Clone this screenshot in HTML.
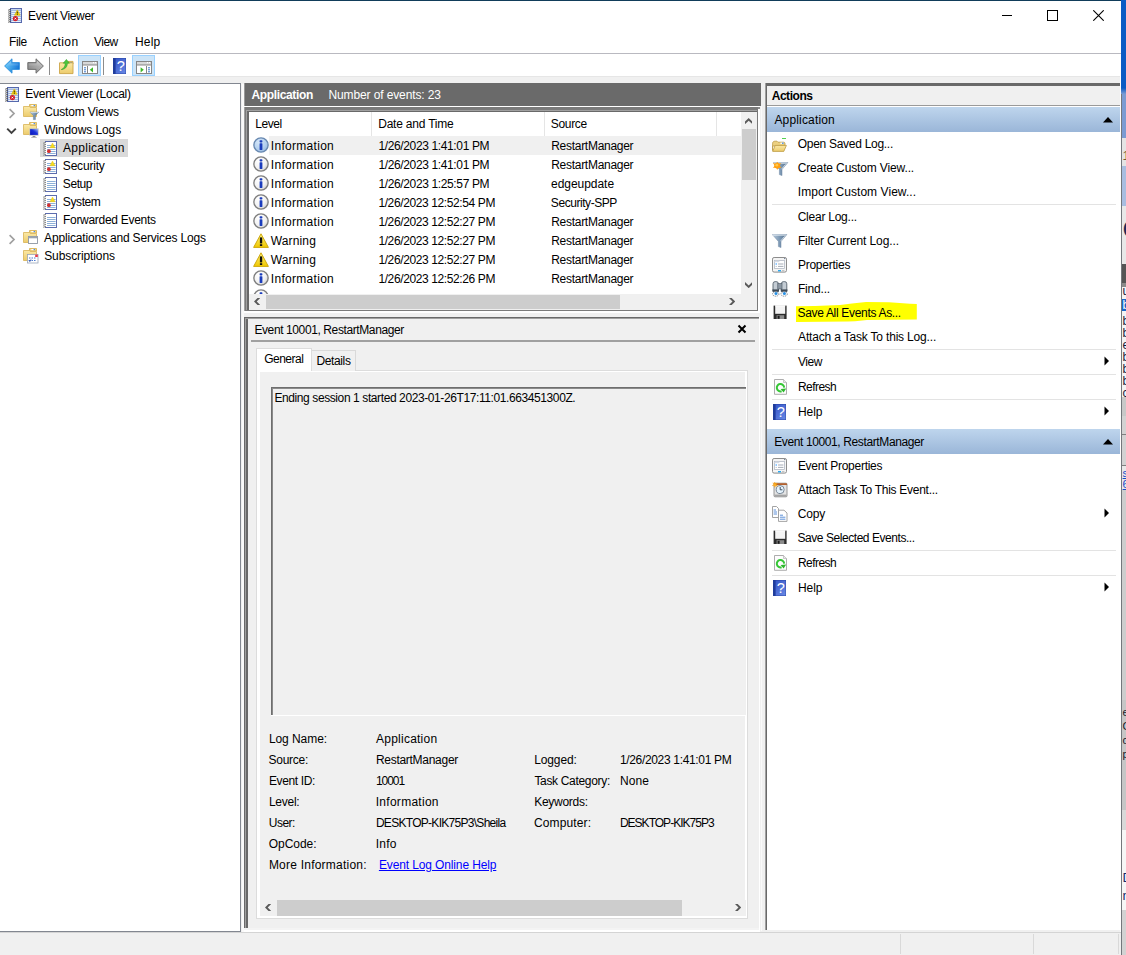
<!DOCTYPE html>
<html lang="en"><head><meta charset="utf-8"><title>Event Viewer</title>
<style>
html,body{margin:0;padding:0;}
body{width:1126px;height:955px;overflow:hidden;background:#f0f0f0;position:relative;font-family:"Liberation Sans", sans-serif;}
body>div,body>svg{position:absolute;}
.t{white-space:pre;}
</style></head><body>
<svg width="0" height="0" style="left:0;top:0"><defs><linearGradient id="gFold" x1="0" y1="0" x2="0" y2="1"><stop offset="0" stop-color="#fbe9a6"/><stop offset="1" stop-color="#eccb6c"/></linearGradient><linearGradient id="gBack" x1="0" y1="0" x2="1" y2="0"><stop offset="0" stop-color="#5cc4f8"/><stop offset="1" stop-color="#0a6fd6"/></linearGradient><linearGradient id="gFwd" x1="0" y1="0" x2="1" y2="0"><stop offset="0" stop-color="#8a8a8a"/><stop offset="1" stop-color="#b4b4b4"/></linearGradient><linearGradient id="gHelp" x1="0" y1="0" x2="1" y2="1"><stop offset="0" stop-color="#2f50c4"/><stop offset="1" stop-color="#6a8ae6"/></linearGradient><radialGradient id="gInfo" cx="0.35" cy="0.3" r="0.8"><stop offset="0" stop-color="#ffffff"/><stop offset="0.6" stop-color="#f2f2f2"/><stop offset="1" stop-color="#c9c9c9"/></radialGradient><radialGradient id="gInfoS" cx="0.35" cy="0.3" r="0.8"><stop offset="0" stop-color="#d4e6f8"/><stop offset="0.6" stop-color="#b4d0ee"/><stop offset="1" stop-color="#8eb2dc"/></radialGradient><linearGradient id="gWarn" x1="0" y1="0" x2="0" y2="1"><stop offset="0" stop-color="#fff27a"/><stop offset="1" stop-color="#f0c800"/></linearGradient><linearGradient id="gFun" x1="0" y1="0" x2="1" y2="0"><stop offset="0" stop-color="#b8cbdc"/><stop offset="0.5" stop-color="#7d99b5"/><stop offset="1" stop-color="#56708c"/></linearGradient><linearGradient id="gMon" x1="0" y1="1" x2="1" y2="0"><stop offset="0" stop-color="#0a14b8"/><stop offset="0.55" stop-color="#1a30d8"/><stop offset="1" stop-color="#9ab4f4"/></linearGradient><linearGradient id="gShine" x1="0" y1="0" x2="0" y2="1"><stop offset="0" stop-color="#fff" stop-opacity="0.45"/><stop offset="0.55" stop-color="#fff" stop-opacity="0.05"/><stop offset="1" stop-color="#000" stop-opacity="0.12"/></linearGradient></defs></svg>
<div style="left:0px;top:0px;width:1121px;height:955px;background:#f0f0f0;"></div>
<div style="left:0px;top:0px;width:1121px;height:1px;background:#113d5a;"></div>
<div style="left:0px;top:1px;width:1121px;height:52px;background:#ffffff;"></div>
<div class="t" style="left:28.0px;top:8px;font-size:12px;line-height:16px;letter-spacing:-0.339px;color:#000;">Event Viewer</div>
<svg style="left:8px;top:8px" width="14" height="15" viewBox="0 0 14 15"><rect x="2.5" y="0.5" width="11" height="14" fill="#c6d6f0" stroke="#5669ad"/><path d="M3 2.5H13M3 4.5H13M3 6.5H13M3 8.5H13M3 10.5H13M3 12.5H13" stroke="#a4bae2" stroke-width="1"/><path d="M4 3.5H12.6M4 5.5H12.6M4 7.5H12.6M4 9.5H12.6M4 11.5H12.6M4 13.5H12.6" stroke="#e9f0fb" stroke-width="1"/><path d="M0.2 2.2L2.8 1.4M0.2 4.2L2.8 3.4M0.2 6.2L2.8 5.4M0.2 8.2L2.8 7.4M0.2 10.2L2.8 9.4M0.2 12.2L2.8 11.4M0.2 14.2L2.8 13.4" stroke="#505050" stroke-width="1"/><path d="M9.3 1.9L12.1 7.3H6.5Z" fill="#f4d212" stroke="#dcb400" stroke-width="0.6" stroke-linejoin="round"/><rect x="8.8" y="3.6" width="1" height="1.9" fill="#3a3000"/><rect x="8.8" y="5.9" width="1" height="0.9" fill="#3a3000"/><circle cx="7.4" cy="10.6" r="2.6" fill="#d3202c"/><path d="M6.6 9.8L8.2 11.4M8.2 9.8L6.6 11.4" stroke="#fff" stroke-width="0.9"/></svg>
<svg style="left:1002px;top:10px" width="10" height="11" viewBox="0 0 10 11"><path d="M0 5.5H10" stroke="#000" stroke-width="1"/></svg>
<svg style="left:1047px;top:10px" width="11" height="11" viewBox="0 0 11 11"><rect x="0.5" y="0.5" width="10" height="10" fill="none" stroke="#000"/></svg>
<svg style="left:1093px;top:10px" width="11" height="11" viewBox="0 0 11 11"><path d="M0.3 0.3L10.7 10.7M10.7 0.3L0.3 10.7" stroke="#000" stroke-width="1.1"/></svg>
<div class="t" style="left:9.0px;top:34px;font-size:12px;line-height:16px;letter-spacing:-0.388px;color:#000;">File</div>
<div class="t" style="left:42.78px;top:34px;font-size:12px;line-height:16px;letter-spacing:0.399px;color:#000;">Action</div>
<div class="t" style="left:94.08px;top:34px;font-size:12px;line-height:16px;letter-spacing:-0.554px;color:#000;">View</div>
<div class="t" style="left:135.0px;top:34px;font-size:12px;line-height:16px;letter-spacing:0.153px;color:#000;">Help</div>
<div style="left:0px;top:53px;width:1121px;height:1px;background:#b9b9c0;"></div>
<div style="left:0px;top:54px;width:1121px;height:22px;background:#ffffff;"></div>
<div style="left:0px;top:76px;width:1121px;height:1px;background:#e6e6e6;"></div>
<div style="left:49px;top:57px;width:1px;height:18px;background:#8c8c8c;"></div>
<div style="left:103px;top:57px;width:1px;height:18px;background:#8c8c8c;"></div>
<div style="left:78px;top:55px;width:23px;height:21px;background:#cce4f7;box-sizing:border-box;border:1px solid #99d1ff;"></div>
<div style="left:132px;top:55px;width:23px;height:21px;background:#cce4f7;box-sizing:border-box;border:1px solid #99d1ff;"></div>
<svg style="left:3.5px;top:58.3px" width="17" height="16" viewBox="0 0 17 16"><path d="M0.6 8L8 0.8V4.6H15.4V11.4H8V15.2Z" fill="url(#gBack)" stroke="#2e8fdc" stroke-width="0.9" stroke-linejoin="round"/><path d="M1.8 8L7.2 2.8V5.4H14.6V10.6H7.2V13.2Z" fill="url(#gShine)"/></svg>
<svg style="left:26.5px;top:58.3px" width="17" height="16" viewBox="0 0 17 16"><path d="M16.4 8L9 0.8V4.6H0.8V11.4H9V15.2Z" fill="url(#gFwd)" stroke="#666" stroke-width="0.9" stroke-linejoin="round"/><path d="M15.2 8L9.8 2.8V5.4H1.6V10.6H9.8V13.2Z" fill="url(#gShine)"/></svg>
<svg style="left:58.5px;top:58.5px" width="15" height="16" viewBox="0 0 15 16"><path d="M9 2.4H14V5H9Z" fill="#f0d27c" stroke="#c9a445" stroke-width="0.8"/><rect x="11.2" y="3" width="2" height="1" fill="#4a8ee8"/><path d="M0.5 3.8H14V14.6H0.5Z" fill="url(#gFold)" stroke="#cca548" stroke-width="0.9"/><path d="M2.2 10.6C5 9.6 6.2 7 6.2 4.2H4.2L7.4 0.4L10.4 4.2H8.4C8.4 8 6 10.4 2.2 10.6Z" fill="#4cc63c" stroke="#2a9a20" stroke-width="0.5"/></svg>
<svg style="left:82px;top:61px" width="16" height="13" viewBox="0 0 16 13"><rect x="0.5" y="0.5" width="15" height="12" fill="#fff" stroke="#868686"/><rect x="1" y="1" width="14" height="1.6" fill="#d8d8d8"/><rect x="1" y="2.8" width="14" height="1" fill="#9a9a9a"/><rect x="11" y="1" width="1" height="1.2" fill="#fff"/><rect x="13" y="1" width="1" height="1.2" fill="#fff"/><rect x="1" y="4" width="14" height="1" fill="#c4c4c4"/><path d="M5.5 5V12.5" stroke="#868686"/><path d="M2 6.8H4M2 8.8H4M2 10.8H4" stroke="#3c78c8" stroke-width="1"/><path d="M11 6.2V11.4L7.8 8.8Z" fill="#3cb828"/></svg>
<svg style="left:113px;top:58px" width="13" height="16" viewBox="0 0 13 16"><rect x="0" y="0" width="13" height="16" fill="url(#gHelp)"/><rect x="0" y="0" width="2.6" height="16" fill="#1f3c9c"/><rect x="0" y="0" width="13" height="16" fill="none" stroke="#24409c" stroke-width="0.8"/><text x="7.7" y="13.2" font-family="Liberation Sans, sans-serif" font-size="14.5" fill="#fff" text-anchor="middle">?</text></svg>
<svg style="left:136px;top:61px" width="16" height="13" viewBox="0 0 16 13"><rect x="0.5" y="0.5" width="15" height="12" fill="#fff" stroke="#868686"/><rect x="1" y="1" width="14" height="1.6" fill="#d8d8d8"/><rect x="1" y="2.8" width="14" height="1" fill="#9a9a9a"/><rect x="11" y="1" width="1" height="1.2" fill="#fff"/><rect x="13" y="1" width="1" height="1.2" fill="#fff"/><rect x="1" y="4" width="14" height="1" fill="#c4c4c4"/><path d="M10.5 5V12.5" stroke="#868686"/><path d="M12 6.8H14M12 8.8H14M12 10.8H14" stroke="#3c78c8" stroke-width="1"/><path d="M4.6 6.2V11.4L7.8 8.8Z" fill="#3cb828"/></svg>
<div style="left:0px;top:83px;width:241px;height:849px;background:#828790;"></div>
<div style="left:0px;top:84px;width:240px;height:847px;background:#ffffff;"></div>
<div style="left:40px;top:139px;width:88px;height:18px;background:#d9d9d9;"></div>
<div class="t" style="left:25.3px;top:86px;font-size:12px;line-height:16px;letter-spacing:-0.252px;color:#000;">Event Viewer (Local)</div>
<div class="t" style="left:44.19px;top:104px;font-size:12px;line-height:16px;letter-spacing:-0.159px;color:#000;">Custom Views</div>
<div class="t" style="left:44.13px;top:122px;font-size:12px;line-height:16px;letter-spacing:-0.091px;color:#000;">Windows Logs</div>
<div class="t" style="left:63.08px;top:140px;font-size:12px;line-height:16px;letter-spacing:0.266px;color:#000;">Application</div>
<div class="t" style="left:62.83px;top:158px;font-size:12px;line-height:16px;letter-spacing:-0.192px;color:#000;">Security</div>
<div class="t" style="left:62.83px;top:176px;font-size:12px;line-height:16px;letter-spacing:-0.416px;color:#000;">Setup</div>
<div class="t" style="left:62.83px;top:194px;font-size:12px;line-height:16px;letter-spacing:-0.400px;color:#000;">System</div>
<div class="t" style="left:63.0px;top:212px;font-size:12px;line-height:16px;letter-spacing:-0.295px;color:#000;">Forwarded Events</div>
<div class="t" style="left:44.08px;top:230px;font-size:12px;line-height:16px;letter-spacing:-0.168px;color:#000;">Applications and Services Logs</div>
<div class="t" style="left:44.23px;top:248px;font-size:12px;line-height:16px;letter-spacing:-0.109px;color:#000;">Subscriptions</div>
<svg style="left:5px;top:87px" width="14" height="15" viewBox="0 0 14 15"><rect x="2.5" y="0.5" width="11" height="14" fill="#c6d6f0" stroke="#5669ad"/><path d="M3 2.5H13M3 4.5H13M3 6.5H13M3 8.5H13M3 10.5H13M3 12.5H13" stroke="#a4bae2" stroke-width="1"/><path d="M4 3.5H12.6M4 5.5H12.6M4 7.5H12.6M4 9.5H12.6M4 11.5H12.6M4 13.5H12.6" stroke="#e9f0fb" stroke-width="1"/><path d="M0.2 2.2L2.8 1.4M0.2 4.2L2.8 3.4M0.2 6.2L2.8 5.4M0.2 8.2L2.8 7.4M0.2 10.2L2.8 9.4M0.2 12.2L2.8 11.4M0.2 14.2L2.8 13.4" stroke="#505050" stroke-width="1"/><path d="M9.3 1.9L12.1 7.3H6.5Z" fill="#f4d212" stroke="#dcb400" stroke-width="0.6" stroke-linejoin="round"/><rect x="8.8" y="3.6" width="1" height="1.9" fill="#3a3000"/><rect x="8.8" y="5.9" width="1" height="0.9" fill="#3a3000"/><circle cx="7.4" cy="10.6" r="2.6" fill="#d3202c"/><path d="M6.6 9.8L8.2 11.4M8.2 9.8L6.6 11.4" stroke="#fff" stroke-width="0.9"/></svg>
<svg style="left:23px;top:104px" width="16" height="17" viewBox="0 0 16 17"><path d="M6.5 0.5H13.5V3H6.5Z" fill="#f3d885" stroke="#d4ad4c" stroke-width="0.8"/><rect x="8.3" y="1" width="3.6" height="1.2" fill="#fff"/><rect x="10.6" y="1" width="1.4" height="1.2" fill="#4a8ee8"/><path d="M0.5 2.5H6.2L7.2 3.5H13.5V12.5H0.5Z" fill="url(#gFold)" stroke="#d8b356" stroke-width="0.8"/><path d="M7 8.2H15.6L12.4 11.6V15.6H10.4V11.6Z" fill="url(#gFun)" stroke="#5e7890" stroke-width="0.5"/><path d="M7.4 8.6H15.2" stroke="#dfe9f2" stroke-width="0.8"/></svg>
<svg style="left:23px;top:122px" width="16" height="17" viewBox="0 0 16 17"><path d="M6.5 0.5H13.5V3H6.5Z" fill="#f3d885" stroke="#d4ad4c" stroke-width="0.8"/><rect x="8.3" y="1" width="3.6" height="1.2" fill="#fff"/><rect x="10.6" y="1" width="1.4" height="1.2" fill="#4a8ee8"/><path d="M0.5 2.5H6.2L7.2 3.5H13.5V12.5H0.5Z" fill="url(#gFold)" stroke="#d8b356" stroke-width="0.8"/><rect x="6.4" y="6.4" width="9.2" height="7.2" fill="#b9bcc0"/><rect x="7.1" y="7.1" width="7.8" height="5.8" fill="url(#gMon)"/><path d="M9 15.3L10 14H12L13 15.3Z" fill="#8c8c8c"/><rect x="8.2" y="15.2" width="5.6" height="0.8" fill="#b4b4b4"/></svg>
<svg style="left:43px;top:141px" width="14" height="15" viewBox="0 0 14 15"><rect x="2.5" y="0.5" width="11" height="14" fill="#fff" stroke="#5c6cae"/><rect x="2" y="1" width="1.6" height="13" fill="#fff"/><path d="M4 4.5H12.6M4 6.5H12.6M4 8.5H12.6M4 10.5H12.6M4 12.5H12.6" stroke="#8db0d8" stroke-width="1"/><path d="M0.2 2.2L3 1.5M0.2 4.2L3 3.5M0.2 6.2L3 5.5M0.2 8.2L3 7.5M0.2 10.2L3 9.5M0.2 12.2L3 11.5M0.2 14.2L3 13.5" stroke="#7a7a7a" stroke-width="1"/><path d="M9.5 2L12 6.7H7Z" fill="#f8dc1e" stroke="#e6c000" stroke-width="0.4" stroke-linejoin="round"/><circle cx="5.9" cy="10.2" r="1.9" fill="#d22f2f"/></svg>
<svg style="left:43px;top:159px" width="14" height="15" viewBox="0 0 14 15"><rect x="2.5" y="0.5" width="11" height="14" fill="#fff" stroke="#5c6cae"/><rect x="2" y="1" width="1.6" height="13" fill="#fff"/><path d="M4 4.5H12.6M4 6.5H12.6M4 8.5H12.6M4 10.5H12.6M4 12.5H12.6" stroke="#8db0d8" stroke-width="1"/><path d="M0.2 2.2L3 1.5M0.2 4.2L3 3.5M0.2 6.2L3 5.5M0.2 8.2L3 7.5M0.2 10.2L3 9.5M0.2 12.2L3 11.5M0.2 14.2L3 13.5" stroke="#7a7a7a" stroke-width="1"/><path d="M9.5 2L12 6.7H7Z" fill="#f8dc1e" stroke="#e6c000" stroke-width="0.4" stroke-linejoin="round"/><circle cx="5.9" cy="10.2" r="1.9" fill="#d22f2f"/></svg>
<svg style="left:43px;top:177px" width="14" height="15" viewBox="0 0 14 15"><rect x="2.5" y="0.5" width="11" height="14" fill="#fff" stroke="#5c6cae"/><rect x="2" y="1" width="1.6" height="13" fill="#fff"/><path d="M4 4.5H12.6M4 6.5H12.6M4 8.5H12.6M4 10.5H12.6M4 12.5H12.6" stroke="#8db0d8" stroke-width="1"/><path d="M0.2 2.2L3 1.5M0.2 4.2L3 3.5M0.2 6.2L3 5.5M0.2 8.2L3 7.5M0.2 10.2L3 9.5M0.2 12.2L3 11.5M0.2 14.2L3 13.5" stroke="#7a7a7a" stroke-width="1"/></svg>
<svg style="left:43px;top:195px" width="14" height="15" viewBox="0 0 14 15"><rect x="2.5" y="0.5" width="11" height="14" fill="#fff" stroke="#5c6cae"/><rect x="2" y="1" width="1.6" height="13" fill="#fff"/><path d="M4 4.5H12.6M4 6.5H12.6M4 8.5H12.6M4 10.5H12.6M4 12.5H12.6" stroke="#8db0d8" stroke-width="1"/><path d="M0.2 2.2L3 1.5M0.2 4.2L3 3.5M0.2 6.2L3 5.5M0.2 8.2L3 7.5M0.2 10.2L3 9.5M0.2 12.2L3 11.5M0.2 14.2L3 13.5" stroke="#7a7a7a" stroke-width="1"/><path d="M9.5 2L12 6.7H7Z" fill="#f8dc1e" stroke="#e6c000" stroke-width="0.4" stroke-linejoin="round"/><circle cx="5.9" cy="10.2" r="1.9" fill="#d22f2f"/></svg>
<svg style="left:43px;top:213px" width="14" height="15" viewBox="0 0 14 15"><rect x="2.5" y="0.5" width="11" height="14" fill="#fff" stroke="#5c6cae"/><rect x="2" y="1" width="1.6" height="13" fill="#fff"/><path d="M4 4.5H12.6M4 6.5H12.6M4 8.5H12.6M4 10.5H12.6M4 12.5H12.6" stroke="#8db0d8" stroke-width="1"/><path d="M0.2 2.2L3 1.5M0.2 4.2L3 3.5M0.2 6.2L3 5.5M0.2 8.2L3 7.5M0.2 10.2L3 9.5M0.2 12.2L3 11.5M0.2 14.2L3 13.5" stroke="#7a7a7a" stroke-width="1"/></svg>
<svg style="left:23px;top:230px" width="16" height="16" viewBox="0 0 16 16"><path d="M6.5 0.5H13.5V3H6.5Z" fill="#f3d885" stroke="#d4ad4c" stroke-width="0.8"/><rect x="8.3" y="1" width="3.6" height="1.2" fill="#fff"/><rect x="10.6" y="1" width="1.4" height="1.2" fill="#4a8ee8"/><path d="M0.5 2.5H6.2L7.2 3.5H13.5V12.5H0.5Z" fill="url(#gFold)" stroke="#d8b356" stroke-width="0.8"/><rect x="5.5" y="6.5" width="9" height="7" fill="#fff" stroke="#8e97a3" stroke-width="0.9"/><rect x="5.5" y="6.5" width="9" height="1.8" fill="#9aa3ae"/></svg>
<svg style="left:23px;top:248px" width="16" height="16" viewBox="0 0 16 16"><path d="M6.5 0.5H13.5V3H6.5Z" fill="#f3d885" stroke="#d4ad4c" stroke-width="0.8"/><rect x="8.3" y="1" width="3.6" height="1.2" fill="#fff"/><rect x="10.6" y="1" width="1.4" height="1.2" fill="#4a8ee8"/><path d="M0.5 2.5H6.2L7.2 3.5H13.5V12.5H0.5Z" fill="url(#gFold)" stroke="#d8b356" stroke-width="0.8"/><rect x="4.5" y="6.5" width="10.5" height="8.5" fill="#fff" stroke="#9aa6b8" stroke-width="0.8"/><rect x="12.2" y="6.6" width="2.6" height="2.4" fill="#e8394a"/><path d="M6 10H7.5M8.5 10H10M11 10H12.5M6 12.5H7.5M8.5 12.5H10M11 12.5H12.5" stroke="#4a7ad0" stroke-width="1.2"/><path d="M5.8 12.2L6.8 13.6L8 11.4" stroke="#2a4aa8" stroke-width="0.8" fill="none"/></svg>
<svg style="left:8px;top:108px" width="8" height="11" viewBox="0 0 8 11"><path d="M1.6 1.2L6 5.5L1.6 9.8" fill="none" stroke="#a0a0a0" stroke-width="1.7"/></svg>
<svg style="left:8px;top:234px" width="8" height="11" viewBox="0 0 8 11"><path d="M1.6 1.2L6 5.5L1.6 9.8" fill="none" stroke="#a0a0a0" stroke-width="1.7"/></svg>
<svg style="left:6px;top:127px" width="11" height="8" viewBox="0 0 11 8"><path d="M1.2 1.6L5.5 6L9.8 1.6" fill="none" stroke="#404040" stroke-width="1.9"/></svg>
<div style="left:242px;top:84px;width:1.5px;height:848px;background:#fafafa;"></div>
<div style="left:244px;top:83px;width:516.8px;height:22.6px;background:#6a6a6a;"></div>
<div class="t" style="left:251.38px;top:87px;font-size:12px;line-height:16px;letter-spacing:-0.336px;color:#fff;font-weight:bold;">Application</div>
<div class="t" style="left:328.5px;top:87px;font-size:12px;line-height:16px;letter-spacing:-0.119px;color:#fff;">Number of events: 23</div>
<div style="left:244px;top:83px;width:1px;height:23px;background:#9a9a9a;"></div>
<div style="left:244px;top:106px;width:516px;height:1.4px;background:#ffffff;"></div>
<div style="left:244px;top:107.4px;width:516px;height:205.6px;background:#ffffff;"></div>
<div style="left:244px;top:107.4px;width:514px;height:203.6px;background:#7a7a7a;"></div>
<div style="left:758px;top:107.4px;width:1.6px;height:1.6px;background:#8a8a8a;"></div>
<div style="left:761px;top:106px;width:1.4px;height:825px;background:#fafafa;"></div>
<div style="left:244px;top:107.4px;width:1px;height:203.6px;background:#a0a0a0;"></div>
<div style="left:246.3px;top:109.5px;width:510.7px;height:200.5px;background:#a0a0a0;"></div>
<div style="left:247px;top:110.5px;width:510px;height:199.5px;background:#696969;"></div>
<div style="left:249px;top:112px;width:508px;height:198px;background:#ffffff;"></div>
<div style="left:371px;top:112px;width:1px;height:24px;background:#e5e5e5;"></div>
<div style="left:544px;top:112px;width:1px;height:24px;background:#e5e5e5;"></div>
<div style="left:716px;top:112px;width:1px;height:24px;background:#e5e5e5;"></div>
<div class="t" style="left:255.3px;top:116px;font-size:12px;line-height:16px;letter-spacing:-0.481px;color:#000;">Level</div>
<div class="t" style="left:378.2px;top:116px;font-size:12px;line-height:16px;letter-spacing:-0.207px;color:#000;">Date and Time</div>
<div class="t" style="left:550.83px;top:116px;font-size:12px;line-height:16px;letter-spacing:-0.331px;color:#000;">Source</div>
<div style="left:269px;top:136px;width:472px;height:19px;background:#f0f0f0;"></div>
<div class="t" style="left:270.86px;top:138px;font-size:12px;line-height:16px;letter-spacing:0.291px;color:#000;">Information</div>
<div class="t" style="left:378.4px;top:138px;font-size:12px;line-height:16px;letter-spacing:-0.364px;color:#000;">1/26/2023 1:41:01 PM</div>
<div class="t" style="left:551.2px;top:138px;font-size:12px;line-height:16px;letter-spacing:-0.279px;color:#000;">RestartManager</div>
<div class="t" style="left:270.86px;top:157px;font-size:12px;line-height:16px;letter-spacing:0.291px;color:#000;">Information</div>
<div class="t" style="left:378.4px;top:157px;font-size:12px;line-height:16px;letter-spacing:-0.364px;color:#000;">1/26/2023 1:41:01 PM</div>
<div class="t" style="left:551.2px;top:157px;font-size:12px;line-height:16px;letter-spacing:-0.279px;color:#000;">RestartManager</div>
<div class="t" style="left:270.86px;top:176px;font-size:12px;line-height:16px;letter-spacing:0.291px;color:#000;">Information</div>
<div class="t" style="left:378.4px;top:176px;font-size:12px;line-height:16px;letter-spacing:-0.364px;color:#000;">1/26/2023 1:25:57 PM</div>
<div class="t" style="left:551.09px;top:176px;font-size:12px;line-height:16px;letter-spacing:-0.047px;color:#000;">edgeupdate</div>
<div class="t" style="left:270.86px;top:195px;font-size:12px;line-height:16px;letter-spacing:0.291px;color:#000;">Information</div>
<div class="t" style="left:378.4px;top:195px;font-size:12px;line-height:16px;letter-spacing:-0.387px;color:#000;">1/26/2023 12:52:54 PM</div>
<div class="t" style="left:550.83px;top:195px;font-size:12px;line-height:16px;letter-spacing:-0.437px;color:#000;">Security-SPP</div>
<div class="t" style="left:270.86px;top:214px;font-size:12px;line-height:16px;letter-spacing:0.291px;color:#000;">Information</div>
<div class="t" style="left:378.4px;top:214px;font-size:12px;line-height:16px;letter-spacing:-0.387px;color:#000;">1/26/2023 12:52:27 PM</div>
<div class="t" style="left:551.2px;top:214px;font-size:12px;line-height:16px;letter-spacing:-0.279px;color:#000;">RestartManager</div>
<div class="t" style="left:270.73px;top:233px;font-size:12px;line-height:16px;letter-spacing:0.147px;color:#000;">Warning</div>
<div class="t" style="left:378.4px;top:233px;font-size:12px;line-height:16px;letter-spacing:-0.387px;color:#000;">1/26/2023 12:52:27 PM</div>
<div class="t" style="left:551.2px;top:233px;font-size:12px;line-height:16px;letter-spacing:-0.279px;color:#000;">RestartManager</div>
<div class="t" style="left:270.73px;top:252px;font-size:12px;line-height:16px;letter-spacing:0.147px;color:#000;">Warning</div>
<div class="t" style="left:378.4px;top:252px;font-size:12px;line-height:16px;letter-spacing:-0.387px;color:#000;">1/26/2023 12:52:27 PM</div>
<div class="t" style="left:551.2px;top:252px;font-size:12px;line-height:16px;letter-spacing:-0.279px;color:#000;">RestartManager</div>
<div class="t" style="left:270.86px;top:271px;font-size:12px;line-height:16px;letter-spacing:0.291px;color:#000;">Information</div>
<div class="t" style="left:378.4px;top:271px;font-size:12px;line-height:16px;letter-spacing:-0.387px;color:#000;">1/26/2023 12:52:26 PM</div>
<div class="t" style="left:551.2px;top:271px;font-size:12px;line-height:16px;letter-spacing:-0.279px;color:#000;">RestartManager</div>
<svg style="left:253px;top:137px" width="16" height="16" viewBox="0 0 16 16"><circle cx="8" cy="8" r="7.15" fill="url(#gInfoS)" stroke="#6888b0" stroke-width="1.35"/><rect x="6.6" y="3.2" width="2.8" height="2.2" rx="0.7" fill="#1a3cbc"/><rect x="6.6" y="6.3" width="2.8" height="6.7" rx="0.4" fill="#1a3cbc"/></svg>
<svg style="left:253px;top:156px" width="16" height="16" viewBox="0 0 16 16"><circle cx="8" cy="8" r="7.15" fill="url(#gInfo)" stroke="#7e7e7e" stroke-width="1.35"/><rect x="6.6" y="3.2" width="2.8" height="2.2" rx="0.7" fill="#1a3cbc"/><rect x="6.6" y="6.3" width="2.8" height="6.7" rx="0.4" fill="#1a3cbc"/></svg>
<svg style="left:253px;top:175px" width="16" height="16" viewBox="0 0 16 16"><circle cx="8" cy="8" r="7.15" fill="url(#gInfo)" stroke="#7e7e7e" stroke-width="1.35"/><rect x="6.6" y="3.2" width="2.8" height="2.2" rx="0.7" fill="#1a3cbc"/><rect x="6.6" y="6.3" width="2.8" height="6.7" rx="0.4" fill="#1a3cbc"/></svg>
<svg style="left:253px;top:194px" width="16" height="16" viewBox="0 0 16 16"><circle cx="8" cy="8" r="7.15" fill="url(#gInfo)" stroke="#7e7e7e" stroke-width="1.35"/><rect x="6.6" y="3.2" width="2.8" height="2.2" rx="0.7" fill="#1a3cbc"/><rect x="6.6" y="6.3" width="2.8" height="6.7" rx="0.4" fill="#1a3cbc"/></svg>
<svg style="left:253px;top:213px" width="16" height="16" viewBox="0 0 16 16"><circle cx="8" cy="8" r="7.15" fill="url(#gInfo)" stroke="#7e7e7e" stroke-width="1.35"/><rect x="6.6" y="3.2" width="2.8" height="2.2" rx="0.7" fill="#1a3cbc"/><rect x="6.6" y="6.3" width="2.8" height="6.7" rx="0.4" fill="#1a3cbc"/></svg>
<svg style="left:253px;top:232.6px" width="16" height="16" viewBox="0 0 16 16"><path d="M8 0.8L15.4 14.4H0.6Z" fill="url(#gWarn)" stroke="#c9a200" stroke-width="0.9" stroke-linejoin="round"/><rect x="6.9" y="4.4" width="2.3" height="6" fill="#111"/><rect x="6.9" y="11.2" width="2.3" height="1.8" fill="#111"/></svg>
<svg style="left:253px;top:251.6px" width="16" height="16" viewBox="0 0 16 16"><path d="M8 0.8L15.4 14.4H0.6Z" fill="url(#gWarn)" stroke="#c9a200" stroke-width="0.9" stroke-linejoin="round"/><rect x="6.9" y="4.4" width="2.3" height="6" fill="#111"/><rect x="6.9" y="11.2" width="2.3" height="1.8" fill="#111"/></svg>
<svg style="left:253px;top:270px" width="16" height="16" viewBox="0 0 16 16"><circle cx="8" cy="8" r="7.15" fill="url(#gInfo)" stroke="#7e7e7e" stroke-width="1.35"/><rect x="6.6" y="3.2" width="2.8" height="2.2" rx="0.7" fill="#1a3cbc"/><rect x="6.6" y="6.3" width="2.8" height="6.7" rx="0.4" fill="#1a3cbc"/></svg>
<svg style="left:253px;top:289px" width="16" height="16" viewBox="0 0 16 16"><circle cx="8" cy="8" r="7.15" fill="url(#gInfo)" stroke="#7e7e7e" stroke-width="1.35"/><rect x="6.6" y="3.2" width="2.8" height="2.2" rx="0.7" fill="#1a3cbc"/><rect x="6.6" y="6.3" width="2.8" height="6.7" rx="0.4" fill="#1a3cbc"/></svg>
<div style="left:741px;top:112px;width:16px;height:182px;background:#f0f0f0;"></div>
<div style="left:742px;top:129px;width:14px;height:51px;background:#cdcdcd;"></div>
<div style="left:249px;top:294px;width:492px;height:16px;background:#f0f0f0;"></div>
<div style="left:266px;top:295px;width:353.5px;height:14px;background:#cdcdcd;"></div>
<div style="left:741px;top:294px;width:16px;height:16px;background:#f0f0f0;"></div>
<svg style="left:745px;top:117.8px" width="7.4" height="6.2" viewBox="0 0 7.4 6.2"><path d="M3.7 0L0 3.5V6.2L3.7 2.7L7.4 6.2V3.5Z" fill="#5a5a5a"/></svg>
<svg style="left:745px;top:282px" width="7.4" height="6.2" viewBox="0 0 7.4 6.2"><path d="M3.7 6.2L0 2.7V0L3.7 3.5L7.4 0V2.7Z" fill="#5a5a5a"/></svg>
<svg style="left:254px;top:298px" width="6.2" height="7" viewBox="0 0 6.2 7"><path d="M0 3.5L3.5 0H6.2L2.7 3.5L6.2 7H3.5Z" fill="#5a5a5a"/></svg>
<svg style="left:729px;top:298px" width="6.2" height="7" viewBox="0 0 6.2 7"><path d="M6.2 3.5L2.7 0H0L3.5 3.5L0 7H2.7Z" fill="#5a5a5a"/></svg>
<div style="left:244px;top:313px;width:516px;height:4px;background:#f0f0f0;"></div>
<div style="left:244px;top:317px;width:516px;height:613px;background:#f4f4f4;"></div>
<div style="left:244px;top:930px;width:516px;height:1.7px;background:#ffffff;"></div>
<div style="left:244px;top:931.7px;width:516px;height:0.6px;background:#dcdcdc;"></div>
<div style="left:758.7px;top:317px;width:1.3px;height:613px;background:#ffffff;"></div>
<div style="left:244px;top:317px;width:514.7px;height:611px;background:#696969;"></div>
<div style="left:245px;top:318px;width:513.7px;height:610px;background:#a0a0a0;"></div>
<div style="left:246px;top:318.7px;width:512.7px;height:609.3px;background:#696969;"></div>
<div style="left:248px;top:318.7px;width:510.7px;height:609.3px;background:#f0f0f0;"></div>
<div class="t" style="left:254.4px;top:322px;font-size:12px;line-height:16px;letter-spacing:-0.393px;color:#000;">Event 10001, RestartManager</div>
<div style="left:251px;top:340px;width:504px;height:2px;background:#a0a0a0;"></div>
<svg style="left:737px;top:324px" width="10" height="10" viewBox="0 0 10 10"><path d="M1.5 1.5L8.5 8.5M8.5 1.5L1.5 8.5" stroke="#000" stroke-width="2"/></svg>
<div style="left:256px;top:370px;width:492px;height:549px;background:#dcdcdc;"></div>
<div style="left:257px;top:371px;width:490px;height:547px;background:#ffffff;"></div>
<div style="left:260px;top:372px;width:485px;height:544px;background:#f0f0f0;"></div>
<div style="left:311px;top:350px;width:45px;height:21px;background:#d9d9d9;"></div>
<div style="left:312px;top:351px;width:43px;height:20px;background:#f0f0f0;"></div>
<div style="left:256px;top:348px;width:56px;height:23px;background:#dcdcdc;"></div>
<div style="left:257px;top:349px;width:54px;height:23px;background:#ffffff;"></div>
<div class="t" style="left:264.19px;top:351px;font-size:12px;line-height:16px;letter-spacing:-0.500px;color:#000;">General</div>
<div class="t" style="left:316.4px;top:353px;font-size:12px;line-height:16px;letter-spacing:-0.359px;color:#000;">Details</div>
<div style="left:271px;top:387px;width:475.5px;height:329px;background:#ffffff;"></div>
<div style="left:271px;top:387px;width:474.5px;height:327.5px;background:#6e6e6e;"></div>
<div style="left:272px;top:388px;width:473.5px;height:326.5px;background:#8a8a8a;"></div>
<div style="left:273px;top:389px;width:472.5px;height:325.5px;background:#f0f0f0;"></div>
<div class="t" style="left:274.4px;top:390px;font-size:12px;line-height:16px;letter-spacing:-0.401px;color:#000;">Ending session 1 started 2023-01-26T17:11:01.663451300Z.</div>
<div class="t" style="left:268.9px;top:731px;font-size:12px;line-height:16px;letter-spacing:-0.065px;color:#000;">Log Name:</div>
<div class="t" style="left:268.53px;top:752px;font-size:12px;line-height:16px;letter-spacing:-0.250px;color:#000;">Source:</div>
<div class="t" style="left:268.9px;top:773px;font-size:12px;line-height:16px;letter-spacing:-0.361px;color:#000;">Event ID:</div>
<div class="t" style="left:268.9px;top:794px;font-size:12px;line-height:16px;letter-spacing:-0.256px;color:#000;">Level:</div>
<div class="t" style="left:268.82px;top:815px;font-size:12px;line-height:16px;letter-spacing:-0.531px;color:#000;">User:</div>
<div class="t" style="left:268.75px;top:836px;font-size:12px;line-height:16px;letter-spacing:-0.040px;color:#000;">OpCode:</div>
<div class="t" style="left:268.9px;top:857px;font-size:12px;line-height:16px;letter-spacing:0.224px;color:#000;">More Information:</div>
<div class="t" style="left:376.08px;top:731px;font-size:12px;line-height:16px;letter-spacing:0.228px;color:#000;">Application</div>
<div class="t" style="left:375.9px;top:752px;font-size:12px;line-height:16px;letter-spacing:-0.279px;color:#000;">RestartManager</div>
<div class="t" style="left:375.9px;top:773px;font-size:12px;line-height:16px;letter-spacing:-1.022px;color:#000;">10001</div>
<div class="t" style="left:375.76px;top:794px;font-size:12px;line-height:16px;letter-spacing:0.274px;color:#000;">Information</div>
<div class="t" style="left:375.9px;top:815px;font-size:12px;line-height:16px;letter-spacing:-0.710px;color:#000;">DESKTOP-KIK75P3\Sheila</div>
<div class="t" style="left:375.76px;top:836px;font-size:12px;line-height:16px;letter-spacing:0.226px;color:#000;">Info</div>
<div class="t" style="left:378.9px;top:857px;font-size:12px;line-height:16px;letter-spacing:-0.126px;color:#0000ff;text-decoration:underline;">Event Log Online Help</div>
<div class="t" style="left:534.2px;top:752px;font-size:12px;line-height:16px;letter-spacing:-0.112px;color:#000;">Logged:</div>
<div class="t" style="left:534.38px;top:773px;font-size:12px;line-height:16px;letter-spacing:-0.323px;color:#000;">Task Category:</div>
<div class="t" style="left:534.18px;top:794px;font-size:12px;line-height:16px;letter-spacing:-0.267px;color:#000;">Keywords:</div>
<div class="t" style="left:533.99px;top:815px;font-size:12px;line-height:16px;letter-spacing:0.135px;color:#000;">Computer:</div>
<div class="t" style="left:619.9px;top:752px;font-size:12px;line-height:16px;letter-spacing:-0.332px;color:#000;">1/26/2023 1:41:01 PM</div>
<div class="t" style="left:619.9px;top:773px;font-size:12px;line-height:16px;letter-spacing:0.080px;color:#000;">None</div>
<div class="t" style="left:619.9px;top:815px;font-size:12px;line-height:16px;letter-spacing:-0.984px;color:#000;">DESKTOP-KIK75P3</div>
<div style="left:260px;top:900px;width:485.5px;height:16px;background:#f0f0f0;"></div>
<div style="left:277px;top:900px;width:404.5px;height:15.5px;background:#cdcdcd;"></div>
<svg style="left:265px;top:904px" width="6.2" height="7" viewBox="0 0 6.2 7"><path d="M0 3.5L3.5 0H6.2L2.7 3.5L6.2 7H3.5Z" fill="#5a5a5a"/></svg>
<svg style="left:735px;top:904px" width="6.2" height="7" viewBox="0 0 6.2 7"><path d="M6.2 3.5L2.7 0H0L3.5 3.5L0 7H2.7Z" fill="#5a5a5a"/></svg>
<div style="left:764.5px;top:83px;width:355.5px;height:847px;background:#a0a0a0;"></div>
<div style="left:765.5px;top:83px;width:354.5px;height:847px;background:#696969;"></div>
<div style="left:767px;top:85.6px;width:353px;height:844.4px;background:#ffffff;"></div>
<div style="left:1120px;top:54px;width:1.5px;height:901px;background:#ffffff;"></div>
<div style="left:767px;top:86.3px;width:353px;height:18.3px;background:#f0f0f0;"></div>
<div style="left:767px;top:104.6px;width:353px;height:1px;background:#9a9a9a;"></div>
<div class="t" style="left:771.68px;top:88px;font-size:12px;line-height:16px;letter-spacing:-0.449px;color:#000;font-weight:bold;">Actions</div>
<div style="left:767px;top:107px;width:353px;height:25px;background:#aac4e2;background:linear-gradient(#bed5ed,#9ab6d8);"></div>
<div style="left:767px;top:429px;width:353px;height:25px;background:#aac4e2;background:linear-gradient(#bed5ed,#9ab6d8);"></div>
<div class="t" style="left:774.38px;top:112px;font-size:12px;line-height:16px;letter-spacing:0.166px;color:#000;">Application</div>
<div class="t" style="left:774.2px;top:434px;font-size:12px;line-height:16px;letter-spacing:-0.383px;color:#000;">Event 10001, RestartManager</div>
<svg style="left:1103px;top:117px" width="10" height="6" viewBox="0 0 10 6"><path d="M0 5.5L5 0L10 5.5Z" fill="#000"/></svg>
<svg style="left:1103px;top:439px" width="10" height="6" viewBox="0 0 10 6"><path d="M0 5.5L5 0L10 5.5Z" fill="#000"/></svg>
<svg style="left:794px;top:300px" width="126" height="25" viewBox="0 0 126 25"><path d="M2.0 6.2L21.0 6.0L46.0 5.0L58.0 3.5L72.0 2.0L95.0 2.2L116.0 3.7L122.8 4.0L122.8 19.4L96.0 19.7L73.0 19.9L61.0 21.2L54.0 21.5L2.0 21.9Z" fill="#ffff00"/></svg>
<div class="t" style="left:797.75px;top:136px;font-size:12px;line-height:16px;letter-spacing:-0.288px;color:#000;">Open Saved Log...</div>
<div class="t" style="left:797.69px;top:160px;font-size:12px;line-height:16px;letter-spacing:-0.133px;color:#000;">Create Custom View...</div>
<div class="t" style="left:797.76px;top:184px;font-size:12px;line-height:16px;letter-spacing:0.057px;color:#000;">Import Custom View...</div>
<div class="t" style="left:797.69px;top:209px;font-size:12px;line-height:16px;letter-spacing:-0.241px;color:#000;">Clear Log...</div>
<div class="t" style="left:797.9px;top:233px;font-size:12px;line-height:16px;letter-spacing:-0.113px;color:#000;">Filter Current Log...</div>
<div class="t" style="left:797.9px;top:257px;font-size:12px;line-height:16px;letter-spacing:-0.235px;color:#000;">Properties</div>
<div class="t" style="left:797.9px;top:281px;font-size:12px;line-height:16px;letter-spacing:-0.175px;color:#000;">Find...</div>
<div class="t" style="left:797.53px;top:305px;font-size:12px;line-height:16px;letter-spacing:-0.320px;color:#000;">Save All Events As...</div>
<div class="t" style="left:798.08px;top:329px;font-size:12px;line-height:16px;letter-spacing:-0.179px;color:#000;">Attach a Task To this Log...</div>
<div class="t" style="left:798.08px;top:354px;font-size:12px;line-height:16px;letter-spacing:-0.518px;color:#000;">View</div>
<div class="t" style="left:797.9px;top:379px;font-size:12px;line-height:16px;letter-spacing:-0.535px;color:#000;">Refresh</div>
<div class="t" style="left:797.9px;top:404px;font-size:12px;line-height:16px;letter-spacing:-0.016px;color:#000;">Help</div>
<div class="t" style="left:797.9px;top:458px;font-size:12px;line-height:16px;letter-spacing:-0.274px;color:#000;">Event Properties</div>
<div class="t" style="left:798.08px;top:482px;font-size:12px;line-height:16px;letter-spacing:-0.274px;color:#000;">Attach Task To This Event...</div>
<div class="t" style="left:797.69px;top:506px;font-size:12px;line-height:16px;letter-spacing:-0.176px;color:#000;">Copy</div>
<div class="t" style="left:797.53px;top:530px;font-size:12px;line-height:16px;letter-spacing:-0.447px;color:#000;">Save Selected Events...</div>
<div class="t" style="left:797.9px;top:555px;font-size:12px;line-height:16px;letter-spacing:-0.535px;color:#000;">Refresh</div>
<div class="t" style="left:797.9px;top:580px;font-size:12px;line-height:16px;letter-spacing:-0.016px;color:#000;">Help</div>
<div style="left:772px;top:203.5px;width:344px;height:1px;background:#e3e3e3;"></div>
<div style="left:772px;top:349px;width:344px;height:1px;background:#e3e3e3;"></div>
<div style="left:772px;top:374px;width:344px;height:1px;background:#e3e3e3;"></div>
<div style="left:772px;top:399px;width:344px;height:1px;background:#e3e3e3;"></div>
<div style="left:772px;top:550px;width:344px;height:1px;background:#e3e3e3;"></div>
<div style="left:772px;top:575px;width:344px;height:1px;background:#e3e3e3;"></div>
<svg style="left:1104px;top:356px" width="6" height="10" viewBox="0 0 6 10"><path d="M0.5 0.5L5 5L0.5 9.5Z" fill="#000"/></svg>
<svg style="left:1104px;top:406px" width="6" height="10" viewBox="0 0 6 10"><path d="M0.5 0.5L5 5L0.5 9.5Z" fill="#000"/></svg>
<svg style="left:1104px;top:508px" width="6" height="10" viewBox="0 0 6 10"><path d="M0.5 0.5L5 5L0.5 9.5Z" fill="#000"/></svg>
<svg style="left:1104px;top:582px" width="6" height="10" viewBox="0 0 6 10"><path d="M0.5 0.5L5 5L0.5 9.5Z" fill="#000"/></svg>
<svg style="left:772px;top:138px" width="15" height="14" viewBox="0 0 15 14"><path d="M10 0.5H14" stroke="#3ccc3c" stroke-width="0.9"/><path d="M0.6 12.6V5.2C0.6 4 1.6 3.2 3 3.2H5L6 4.2H11.6C12.6 4.2 13 4.8 13 5.6V8H0.6Z" fill="#ecd080" stroke="#bd9a44" stroke-width="0.8" stroke-linejoin="round"/><rect x="8.4" y="4.6" width="3.2" height="1.3" fill="#fff"/><rect x="10" y="4.6" width="1.6" height="1.3" fill="#4a8ee8"/><path d="M0.7 13.4L3.2 7.4H14.4L11.8 13.4Z" fill="url(#gFold)" stroke="#bd9a44" stroke-width="0.8" stroke-linejoin="round"/></svg>
<svg style="left:773px;top:162px" width="16" height="14" viewBox="0 0 16 14"><path d="M0.4 0.6H14.8L9 7.4V13.6L6.4 12.6V7.4Z" fill="url(#gFun)" stroke="#6c87a2" stroke-width="0.5" stroke-linejoin="round"/><path d="M1 1.1H14.2" stroke="#e6eef5" stroke-width="1"/><path d="M12.6 2.4L8.6 7.2" stroke="#dfe8f0" stroke-width="0.9"/><circle cx="4.2" cy="3.6" r="2.9" fill="#ffa51a"/><path d="M4.2 -0.6L5.2 2L8.4 1L6.6 3.6L8.6 6L5.4 5.6L4.2 8L3.2 5.4L0 6L1.8 3.6L-0.2 1L3.2 2Z" fill="#ff9e10"/><circle cx="3.8" cy="3.2" r="1.4" fill="#ffc84a"/></svg>
<svg style="left:772px;top:234px" width="16" height="14" viewBox="0 0 16 14"><path d="M0.4 0.6H14.8L9 7.4V13.6L6.4 12.6V7.4Z" fill="url(#gFun)" stroke="#6c87a2" stroke-width="0.5" stroke-linejoin="round"/><path d="M1 1.1H14.2" stroke="#e6eef5" stroke-width="1"/><path d="M12.6 2.4L8.6 7.2" stroke="#dfe8f0" stroke-width="0.9"/></svg>
<svg style="left:772px;top:257px" width="15" height="16" viewBox="0 0 15 16"><rect x="0.5" y="0.5" width="14" height="14.6" rx="1.6" fill="#f4f4f4" stroke="#8c8c8c"/><rect x="2.4" y="3.6" width="10.2" height="8" fill="#fff" stroke="#a8b0bc" stroke-width="0.7"/><rect x="2.4" y="3.6" width="5" height="1.6" fill="#d4dae4"/><rect x="3.6" y="6.4" width="1.2" height="1.2" fill="#1e90ff"/><path d="M6 7H11.4M6 9.4H11.4" stroke="#9098a4" stroke-width="0.8"/><rect x="3.6" y="8.9" width="1.2" height="1" fill="#b4bcc8"/><rect x="6" y="13" width="3" height="1.4" fill="#28a8f0"/><rect x="10" y="13" width="2.4" height="1.2" fill="#c4c4c4"/><path d="M12 1.6H13.2" stroke="#6c7c94" stroke-width="1"/></svg>
<svg style="left:772px;top:281px" width="16" height="16" viewBox="0 0 16 16"><rect x="1" y="0.6" width="5.4" height="11" rx="2.2" fill="#c4ccd4" stroke="#56626e" stroke-width="0.9"/><rect x="9.4" y="0.6" width="5.4" height="11" rx="2.2" fill="#c4ccd4" stroke="#56626e" stroke-width="0.9"/><rect x="5.8" y="2.6" width="4.2" height="5.4" fill="#8c98a4" stroke="#56626e" stroke-width="0.7"/><rect x="0.4" y="8.4" width="6.6" height="2.2" fill="#3c4854"/><rect x="8.8" y="8.4" width="6.6" height="2.2" fill="#3c4854"/><ellipse cx="3.7" cy="13" rx="3.2" ry="2.2" fill="#fff" stroke="#4c5864" stroke-width="0.7" stroke-dasharray="1.2 0.8"/><ellipse cx="12.1" cy="13" rx="3.2" ry="2.2" fill="#fff" stroke="#4c5864" stroke-width="0.7" stroke-dasharray="1.2 0.8"/><circle cx="4" cy="12.6" r="1.5" fill="#2890e4"/><circle cx="12.4" cy="12.6" r="1.5" fill="#2890e4"/></svg>
<svg style="left:773px;top:305.4px" width="14" height="15" viewBox="0 0 14 15"><path d="M0.6 0.6H13.6V14H0.6Z" fill="#2c2c2c"/><rect x="2.2" y="0.4" width="10" height="8.4" fill="#f4f4f4"/><rect x="2.2" y="0.4" width="10" height="1" fill="#fff"/><rect x="3.6" y="10.2" width="7.6" height="3.8" fill="#8c8c8c"/><rect x="4.6" y="10.8" width="2" height="3" fill="#1c1c1c"/></svg>
<svg style="left:774px;top:379px" width="13" height="16" viewBox="0 0 13 16"><path d="M0.5 0.5H9.5L12.5 3.5V15.3H0.5Z" fill="#fdfcfd" stroke="#a4a4a4" stroke-width="0.9"/><path d="M9.5 0.5V3.5H12.5" fill="#e8e8e8" stroke="#b4b4b4" stroke-width="0.7"/><path d="M10.2 8.6A3.7 3.7 0 1 0 7.6 12.3" fill="none" stroke="#36c636" stroke-width="2"/><path d="M6.6 10L12.2 9.4L9.6 13.6Z" fill="#2cb82c"/></svg>
<svg style="left:773px;top:404px" width="13" height="16" viewBox="0 0 13 16"><rect x="0" y="0" width="13" height="16" fill="url(#gHelp)"/><rect x="0" y="0" width="2.6" height="16" fill="#1f3c9c"/><rect x="0" y="0" width="13" height="16" fill="none" stroke="#24409c" stroke-width="0.8"/><text x="7.7" y="13.2" font-family="Liberation Sans, sans-serif" font-size="14.5" fill="#fff" text-anchor="middle">?</text></svg>
<svg style="left:772px;top:458px" width="15" height="16" viewBox="0 0 15 16"><rect x="0.5" y="0.5" width="14" height="14.6" rx="1.6" fill="#f4f4f4" stroke="#8c8c8c"/><rect x="2.4" y="3.6" width="10.2" height="8" fill="#fff" stroke="#a8b0bc" stroke-width="0.7"/><rect x="2.4" y="3.6" width="5" height="1.6" fill="#d4dae4"/><rect x="3.6" y="6.4" width="1.2" height="1.2" fill="#1e90ff"/><path d="M6 7H11.4M6 9.4H11.4" stroke="#9098a4" stroke-width="0.8"/><rect x="3.6" y="8.9" width="1.2" height="1" fill="#b4bcc8"/><rect x="6" y="13" width="3" height="1.4" fill="#28a8f0"/><rect x="10" y="13" width="2.4" height="1.2" fill="#c4c4c4"/><path d="M12 1.6H13.2" stroke="#6c7c94" stroke-width="1"/></svg>
<svg style="left:772px;top:482px" width="16" height="16" viewBox="0 0 16 16"><rect x="2" y="1.2" width="13" height="13.6" rx="1" fill="#e4e4e4" stroke="#8c8c8c" stroke-width="0.9"/><path d="M2 2.2Q2 1.2 3 1.2H14Q15 1.2 15 2.2V3H2Z" fill="#b4602c"/><rect x="2.4" y="12.6" width="12.2" height="2" fill="#a4a4a4"/><circle cx="8.2" cy="7.6" r="4" fill="#e4f2fc" stroke="#6c7c8c" stroke-width="0.9"/><path d="M8.2 5V7.8H10.4" fill="none" stroke="#2c3c4c" stroke-width="0.9"/><path d="M2.6 -0.2L3.4 1.6L5.4 1L4.2 2.6L5.6 4.2L3.6 3.8L2.8 5.6L2.2 3.6L0.2 3.6L1.8 2.4L0.8 0.8L2.4 1.4Z" fill="#ffb020" stroke="#f09000" stroke-width="0.3"/></svg>
<svg style="left:772px;top:506px" width="16" height="16" viewBox="0 0 16 16"><path d="M0.5 0.5H4.5L6.5 2.5V11.5H0.5Z" fill="#fff" stroke="#9a9a9a" stroke-width="0.9"/><path d="M1.6 4H4M1.6 6H5M1.6 8H5" stroke="#4c84d4" stroke-width="0.9"/><path d="M6.5 4.2H12L15 7V15.4H6.5Z" fill="#fff" stroke="#9a9a9a" stroke-width="0.9"/><path d="M8 9.2H11M8 11.2H13.4M8 13.2H13.4" stroke="#4c84d4" stroke-width="0.9"/></svg>
<svg style="left:773px;top:530.4px" width="14" height="15" viewBox="0 0 14 15"><path d="M0.6 0.6H13.6V14H0.6Z" fill="#2c2c2c"/><rect x="2.2" y="0.4" width="10" height="8.4" fill="#f4f4f4"/><rect x="2.2" y="0.4" width="10" height="1" fill="#fff"/><rect x="3.6" y="10.2" width="7.6" height="3.8" fill="#8c8c8c"/><rect x="4.6" y="10.8" width="2" height="3" fill="#1c1c1c"/></svg>
<svg style="left:774px;top:555px" width="13" height="16" viewBox="0 0 13 16"><path d="M0.5 0.5H9.5L12.5 3.5V15.3H0.5Z" fill="#fdfcfd" stroke="#a4a4a4" stroke-width="0.9"/><path d="M9.5 0.5V3.5H12.5" fill="#e8e8e8" stroke="#b4b4b4" stroke-width="0.7"/><path d="M10.2 8.6A3.7 3.7 0 1 0 7.6 12.3" fill="none" stroke="#36c636" stroke-width="2"/><path d="M6.6 10L12.2 9.4L9.6 13.6Z" fill="#2cb82c"/></svg>
<svg style="left:773px;top:580px" width="13" height="16" viewBox="0 0 13 16"><rect x="0" y="0" width="13" height="16" fill="url(#gHelp)"/><rect x="0" y="0" width="2.6" height="16" fill="#1f3c9c"/><rect x="0" y="0" width="13" height="16" fill="none" stroke="#24409c" stroke-width="0.8"/><text x="7.7" y="13.2" font-family="Liberation Sans, sans-serif" font-size="14.5" fill="#fff" text-anchor="middle">?</text></svg>
<div style="left:0px;top:932px;width:1121.3px;height:1px;background:#d4d4d4;"></div>
<div style="left:0px;top:933px;width:1121.3px;height:22px;background:#f0f0f0;"></div>
<div style="left:900px;top:934px;width:1px;height:20px;background:#d9d9d9;"></div>
<div style="left:1033px;top:934px;width:1px;height:20px;background:#d9d9d9;"></div>
<div style="left:1118px;top:934px;width:1px;height:20px;background:#d9d9d9;"></div>
<div style="left:1121.3px;top:0px;width:4.7px;height:92px;background:#0b5bc4;"></div>
<div style="left:1121.3px;top:92px;width:4.7px;height:46px;background:#7b9bd2;"></div>
<div style="left:1121.3px;top:138px;width:4.7px;height:28px;background:#e4e4e4;"></div>
<div style="left:1121.3px;top:166px;width:4.7px;height:40px;background:#a8bde0;"></div>
<div style="left:1121.3px;top:206px;width:4.7px;height:58px;background:#e8e8e8;"></div>
<div style="left:1121.3px;top:264px;width:4.7px;height:19px;background:#555555;"></div>
<div style="left:1121.3px;top:283px;width:4.7px;height:4px;background:#8a8a8a;"></div>
<div style="left:1121.3px;top:287px;width:4.7px;height:110px;background:#f4f4f4;"></div>
<div style="left:1121.3px;top:397px;width:4.7px;height:19px;background:#c8c8c8;"></div>
<div style="left:1121.3px;top:416px;width:4.7px;height:50px;background:#d2d2d2;"></div>
<div style="left:1121.3px;top:466px;width:4.7px;height:24px;background:#e8e8e8;"></div>
<div style="left:1121.3px;top:490px;width:4.7px;height:210px;background:#cdcdcd;"></div>
<div style="left:1121.3px;top:700px;width:4.7px;height:110px;background:#c6c6c6;"></div>
<div style="left:1121.3px;top:810px;width:4.7px;height:20px;background:#d8d8d8;"></div>
<div style="left:1121.3px;top:830px;width:4.7px;height:80px;background:#f6f6f6;"></div>
<div style="left:1121.3px;top:910px;width:4.7px;height:45px;background:#d2d2d2;"></div>
<div style="left:1121.3px;top:88px;width:4.7px;height:6px;background:#3a78cc;background:linear-gradient(#0b5bc4,#7b9bd2);"></div>
<div style="left:1121.3px;top:298.6px;width:4.7px;height:12.4px;background:#1a66c8;"></div>
<div style="left:1121.3px;top:434px;width:4.7px;height:1px;background:#808080;"></div>
<div style="left:1121.3px;top:465px;width:4.7px;height:1px;background:#808080;"></div>
<div style="left:1121.3px;top:94px;width:0.7px;height:861px;background:#74777c;"></div>
<div class="t" style="left:1122.6px;top:149px;font-size:13px;line-height:14px;color:#7a5a3a;">1</div>
<div class="t" style="left:1122.6px;top:214px;font-size:26px;line-height:14px;color:#1a2a5a;line-height:30px;">C</div>
<div class="t" style="left:1122.6px;top:284px;font-size:12px;line-height:14px;color:#1a1a3a;">u</div>
<div class="t" style="left:1122.6px;top:298px;font-size:12px;line-height:14px;color:#ffffff;">b</div>
<div class="t" style="left:1122.6px;top:314px;font-size:12px;line-height:14px;color:#1a1a3a;">b</div>
<div class="t" style="left:1122.6px;top:326px;font-size:12px;line-height:14px;color:#1a1a3a;">b</div>
<div class="t" style="left:1122.6px;top:338px;font-size:12px;line-height:14px;color:#1a1a3a;">e</div>
<div class="t" style="left:1122.6px;top:350px;font-size:12px;line-height:14px;color:#1a1a3a;">b</div>
<div class="t" style="left:1122.6px;top:362px;font-size:12px;line-height:14px;color:#1a1a3a;">b</div>
<div class="t" style="left:1122.6px;top:374px;font-size:12px;line-height:14px;color:#1a1a3a;">b</div>
<div class="t" style="left:1122.6px;top:386px;font-size:12px;line-height:14px;color:#1a1a3a;">c</div>
<div class="t" style="left:1122.6px;top:466px;font-size:11px;line-height:14px;color:#1a4ac8;text-decoration:underline;">s</div>
<div class="t" style="left:1122.6px;top:477px;font-size:11px;line-height:14px;color:#1a4ac8;text-decoration:underline;">6</div>
<div class="t" style="left:1122.6px;top:705px;font-size:11px;line-height:14px;color:#1a1a2a;font-family:"Liberation Mono",monospace;">e</div>
<div class="t" style="left:1122.6px;top:719px;font-size:11px;line-height:14px;color:#1a1a2a;font-family:"Liberation Mono",monospace;">C</div>
<div class="t" style="left:1122.6px;top:733px;font-size:11px;line-height:14px;color:#1a1a2a;font-family:"Liberation Mono",monospace;">o</div>
<div class="t" style="left:1122.6px;top:747px;font-size:11px;line-height:14px;color:#1a1a2a;font-family:"Liberation Mono",monospace;">p</div>
<div class="t" style="left:1122.6px;top:871px;font-size:13px;line-height:14px;color:#1a2a6a;">D</div>
<div class="t" style="left:1122.6px;top:889px;font-size:13px;line-height:14px;color:#1a2a6a;">n</div>
</body></html>
